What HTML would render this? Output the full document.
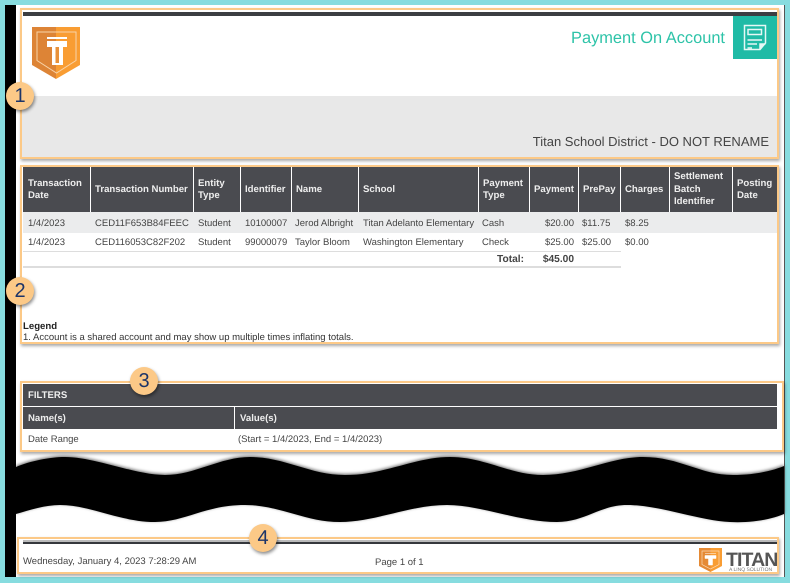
<!DOCTYPE html>
<html><head><meta charset="utf-8"><style>
html,body{margin:0;padding:0;width:790px;height:583px;overflow:hidden;background:#87dcdf}
body{position:relative;font-family:"Liberation Sans",sans-serif;color:#444;font-size:9.5px;text-rendering:geometricPrecision}
div{position:absolute;box-sizing:border-box}
.box{border:2px solid #fcc987;box-shadow:1px 2px 3px rgba(0,0,0,.35);background:transparent}
.h{background:#4a4b50;color:#eee;font-weight:bold;font-size:9.6px;line-height:12.5px;height:45px;top:167px;display:flex;align-items:center;padding-left:4px;padding-top:1px}
.t{white-space:nowrap;line-height:12px;height:12px}
.b{border-radius:50%;width:28px;height:28px;background:#fcc987;color:#1c3468;font-size:20px;line-height:28px;text-align:center;box-shadow:1px 2px 3px rgba(0,0,0,.45)}
.bar{background:#4a4b50;color:#eee;font-weight:bold;font-size:9.6px;display:flex;align-items:center;padding-left:5px;padding-top:1px}
</style></head><body>
<div style="left:5px;top:5px;width:11px;height:572px;background:#000"></div>
<div style="left:16px;top:5px;width:768px;height:572px;background:#fff"></div>
<div style="left:784px;top:5px;width:1px;height:572px;background:#555"></div>

<!-- Section 1 -->
<div style="left:23px;top:12px;width:754px;height:4px;background:#3c3e42"></div>
<svg style="position:absolute;left:32px;top:27px" width="48" height="52" viewBox="0 0 48 52">
<path d="M0 0H24V52L0 38Z" fill="#dd8436"/><path d="M24 0H48V38L24 52Z" fill="#f99d33"/>
<path d="M5 5H44V33.500L24.500 46L5 33.500Z" fill="none" stroke="#f8d3a8" stroke-width="1"/>
<path d="M15 10H35V12H15Z" fill="#fff"/>
<path d="M15 14H35V20H31V38H20V20H15Z" fill="#fff"/><path d="M23.500 20H27V36H23.500Z" fill="#e8913a"/>
</svg>
<div class="t" style="right:65px;top:28px;height:20px;line-height:20px;font-size:16.4px;color:#2dc3a8">Payment On Account</div>
<div style="left:733px;top:16px;width:44px;height:43px;background:#1fbba6"></div>
<svg style="position:absolute;left:743px;top:24px" width="25" height="28" viewBox="0 0 25 28" fill="none" stroke="#e6f8f5" stroke-width="1.500">
<path d="M1.500 1.500H22.500V19L17 25.500H1.500Z"/><path d="M17 25.500V20H22.500" fill="#e6f8f5"/>
<rect x="5" y="5.500" width="13.500" height="5"/><path d="M4.500 16H19M4.500 20H14M4.500 24H9"/>
</svg>
<div style="left:22px;top:96px;width:755px;height:61px;background:#e8e8e8"></div>
<div class="t" style="right:21px;top:134px;height:16px;line-height:16px;font-size:13px;color:#444">Titan School District - DO NOT RENAME</div>
<div class="box" style="left:20px;top:8px;width:759px;height:151px"></div>

<!-- Section 2 -->
<div class="h" style="left:23px;width:67px;padding-left:5px">Transaction Date</div>
<div class="h" style="left:91px;width:102px">Transaction Number</div>
<div class="h" style="left:194px;width:46px">Entity Type</div>
<div class="h" style="left:241px;width:50px">Identifier</div>
<div class="h" style="left:292px;width:66px">Name</div>
<div class="h" style="left:359px;width:119px">School</div>
<div class="h" style="left:479px;width:50px;padding-right:2px">Payment Type</div>
<div class="h" style="left:530px;width:48px">Payment</div>
<div class="h" style="left:579px;width:41px">PrePay</div>
<div class="h" style="left:621px;width:48px">Charges</div>
<div class="h" style="left:670px;width:62px">Settlement Batch Identifier</div>
<div class="h" style="left:733px;width:44px">Posting Date</div>

<div style="left:23px;top:212px;width:754px;height:21px;background:#ebeced"></div>
<div style="left:23px;top:251px;width:598px;height:1px;background:#ddd"></div>
<div style="left:23px;top:266px;width:598px;height:2px;background:#ddd"></div>

<div class="t" style="left:28px;top:218px">1/4/2023</div>
<div class="t" style="left:95px;top:218px">CED11F653B84FEEC</div>
<div class="t" style="left:198px;top:218px">Student</div>
<div class="t" style="left:245px;top:218px">10100007</div>
<div class="t" style="left:295px;top:218px">Jerod Albright</div>
<div class="t" style="left:363px;top:218px">Titan Adelanto Elementary</div>
<div class="t" style="left:482px;top:218px">Cash</div>
<div class="t" style="right:216px;top:218px">$20.00</div>
<div class="t" style="left:582px;top:218px">$11.75</div>
<div class="t" style="left:625px;top:218px">$8.25</div>

<div class="t" style="left:28px;top:237px">1/4/2023</div>
<div class="t" style="left:95px;top:237px">CED116053C82F202</div>
<div class="t" style="left:198px;top:237px">Student</div>
<div class="t" style="left:245px;top:237px">99000079</div>
<div class="t" style="left:295px;top:237px">Taylor Bloom</div>
<div class="t" style="left:363px;top:237px">Washington Elementary</div>
<div class="t" style="left:482px;top:237px">Check</div>
<div class="t" style="right:216px;top:237px">$25.00</div>
<div class="t" style="left:582px;top:237px">$25.00</div>
<div class="t" style="left:625px;top:237px">$0.00</div>

<div class="t" style="right:266px;top:254px;font-weight:bold;font-size:10.2px">Total:</div>
<div class="t" style="right:216px;top:254px;font-weight:bold;font-size:10.2px">$45.00</div>

<div class="t" style="left:23px;top:321px;color:#222;font-weight:bold;font-size:9.6px">Legend</div>
<div class="t" style="left:23px;top:332px;color:#333;font-size:9.5px">1. Account is a shared account and may show up multiple times inflating totals.</div>
<div class="box" style="left:20px;top:165px;width:759px;height:179px"></div>

<!-- Section 3 -->
<div class="bar" style="left:23px;top:384px;width:754px;height:22px">FILTERS</div>
<div class="bar" style="left:23px;top:407px;width:211px;height:22px">Name(s)</div>
<div class="bar" style="left:235px;top:407px;width:542px;height:22px">Value(s)</div>
<div class="t" style="left:28px;top:434px">Date Range</div>
<div class="t" style="left:238px;top:434px">(Start = 1/4/2023, End = 1/4/2023)</div>
<div class="box" style="left:20px;top:381px;width:764px;height:71px"></div>

<!-- Torn edge -->
<svg style="position:absolute;left:16px;top:450px;filter:drop-shadow(0 -1px 1.500px rgba(0,0,0,.6))" width="768" height="80" viewBox="16 450 768 80">
<path d="M16 467C30 461 50 457 65 457C95 457 135 475 165 475C195 475 220 457 250 457C285 457 310 475 345 475C385 475 415 457 450 457C485 457 510 475 543 475C580 475 610 457 643 457C680 457 700 475 733 475C750 475 770 472 784 466V514C770 520 750 523 730 522C700 521 660 505 627 505C600 505 585 522 557 522C520 522 480 505 447 505C410 505 375 522 340 522C305 522 280 505 245 505C205 505 185 522 155 522C120 522 90 505 60 505C45 505 30 510 16 514Z" fill="#000"/>
</svg>

<!-- Section 4 -->
<div style="left:23px;top:540px;width:754px;height:2px;background:#bbb"></div>
<div style="left:23px;top:542px;width:754px;height:2px;background:#35383d"></div>
<div class="t" style="left:23px;top:556px">Wednesday, January 4, 2023 7:28:29 AM</div>
<div class="t" style="left:375px;top:557px">Page 1 of 1</div>
<svg style="position:absolute;left:699px;top:548px" width="23" height="24" viewBox="0 0 23 24">
<path d="M0 0H11.500V24L0 18Z" fill="#e58a35"/><path d="M11.500 0H23V18L11.500 24Z" fill="#f99d33"/>
<path d="M3 3H20V16.500L11.500 21L3 16.500Z" fill="none" stroke="#fbdcb8" stroke-width=".7"/>
<path d="M6 5.500H17M6 7.500H17V10.500H13.500V17H9.500V10.500H6Z" fill="#fff" stroke="#fff" stroke-width=".5"/>
</svg>
<div class="t" style="left:726px;top:550px;height:20px;line-height:20px;font-size:19.5px;font-weight:bold;color:#555;letter-spacing:-.9px">TITAN</div>
<div class="t" style="left:729px;top:567px;height:6px;line-height:6px;font-size:5px;color:#777">A LINQ SOLUTION</div>
<div class="box" style="left:17px;top:537px;width:762px;height:37px"></div>

<!-- Badges -->
<div class="b" style="left:6px;top:82px">1</div>
<div class="b" style="left:6px;top:277px">2</div>
<div class="b" style="left:130px;top:367px">3</div>
<div class="b" style="left:249px;top:524px">4</div>
</body></html>
